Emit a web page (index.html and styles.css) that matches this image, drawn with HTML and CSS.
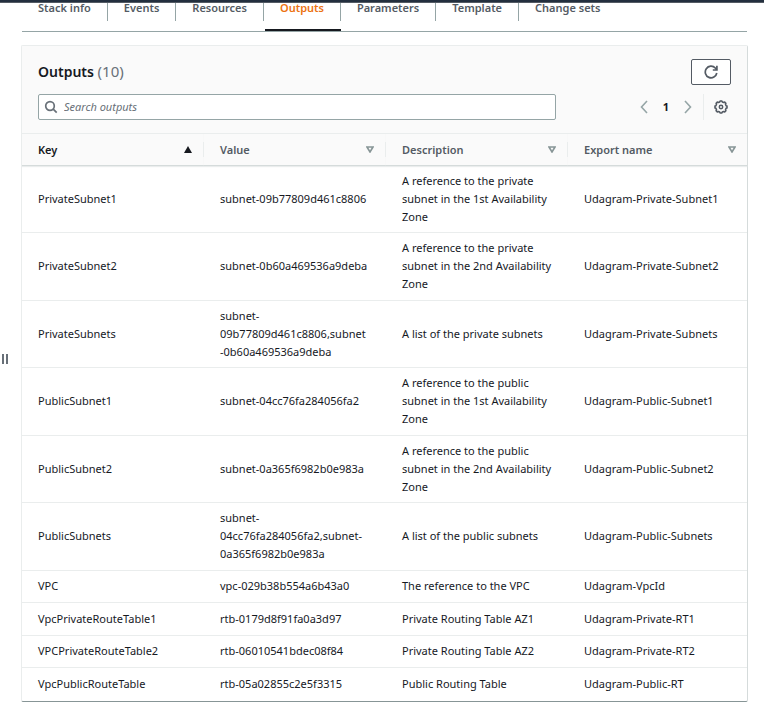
FILE: index.html
```html
<!DOCTYPE html>
<html lang="en">
<head>
<meta charset="utf-8">
<title>Stack outputs</title>
<link rel="stylesheet" href="styles.css">
</head>
<body>
<header class="topbar"></header>
<div class="shell">
  <aside class="rail">
    <button class="grip" type="button" aria-label="Resize panel"><span></span><span></span></button>
  </aside>
  <main class="content">
    <nav class="tabs">
      <a class="tab" href="#info"><span>Stack info</span></a>
      <a class="tab" href="#events"><span>Events</span></a>
      <a class="tab" href="#resources"><span>Resources</span></a>
      <a class="tab active" href="#outputs" aria-current="page"><span>Outputs</span></a>
      <a class="tab" href="#parameters"><span>Parameters</span></a>
      <a class="tab" href="#template"><span>Template</span></a>
      <a class="tab" href="#changesets"><span>Change sets</span></a>
    </nav>
    <section class="panel">
      <div class="panel-head">
        <div class="title-row">
          <h2>Outputs <span class="count">(10)</span></h2>
          <button class="refresh" type="button" aria-label="Refresh">
            <svg width="14" height="14" viewBox="0 0 14 14" fill="none" stroke="currentColor" stroke-width="1.7"><path d="M12.8 8A5.8 5.8 0 1 1 11.3 3L12.6 4.8"/><path d="M8.8 5H12.9V0.7"/></svg>
          </button>
        </div>
        <div class="tools">
          <label class="search">
            <svg width="14" height="14" viewBox="0 0 14 14" fill="none" stroke="currentColor" stroke-width="1.7"><circle cx="6" cy="6" r="4.3"/><path d="M9.2 9.2L12.7 12.7"/></svg>
            <input type="search" placeholder="Search outputs" aria-label="Search outputs">
          </label>
          <div class="pager">
            <button type="button" aria-label="Previous page"><svg width="8" height="14" viewBox="0 0 8 14" fill="none" stroke="currentColor" stroke-width="1.6"><path d="M7 1L1.5 7L7 13"/></svg></button>
            <span class="page">1</span>
            <button type="button" aria-label="Next page"><svg width="8" height="14" viewBox="0 0 8 14" fill="none" stroke="currentColor" stroke-width="1.6"><path d="M1 1L6.5 7L1 13"/></svg></button>
          </div>
          <button class="settings" type="button" aria-label="Preferences">
            <svg width="14" height="14" viewBox="0 0 14 14" fill="none" stroke="currentColor"><path stroke-width="1.6" stroke-linejoin="round" d="M5.7 1.9L6.1 1H7.9L8.3 1.9L9.7 2.5L10.7 2.1L11.9 3.3L11.5 4.3L12.1 5.7L13 6.1V7.9L12.1 8.3L11.5 9.7L11.9 10.7L10.7 11.9L9.7 11.5L8.3 12.1L7.9 13H6.1L5.7 12.1L4.3 11.5L3.3 11.9L2.1 10.7L2.5 9.7L1.9 8.3L1 7.9V6.1L1.9 5.7L2.5 4.3L2.1 3.3L3.3 2.1L4.3 2.5Z"/><circle cx="7" cy="7" r="1.7" stroke-width="1.5"/></svg>
          </button>
        </div>
      </div>
      <table>
        <colgroup><col class="col"><col class="col"><col class="col"><col></colgroup>
        <thead>
          <tr>
            <th class="sorted" aria-sort="ascending"><button type="button">Key <svg width="8" height="7" viewBox="0 0 8 7"><path fill="currentColor" d="M4 0L8 7H0Z"/></svg></button></th>
            <th><button type="button">Value <svg width="8" height="7" viewBox="0 0 8 7"><path fill="none" stroke="currentColor" stroke-width="1.6" d="M1 1H7L4 6Z"/></svg></button></th>
            <th><button type="button">Description <svg width="8" height="7" viewBox="0 0 8 7"><path fill="none" stroke="currentColor" stroke-width="1.6" d="M1 1H7L4 6Z"/></svg></button></th>
            <th><button type="button">Export name <svg width="8" height="7" viewBox="0 0 8 7"><path fill="none" stroke="currentColor" stroke-width="1.6" d="M1 1H7L4 6Z"/></svg></button></th>
          </tr>
        </thead>
        <tbody>
          <tr><td>PrivateSubnet1</td><td>subnet-09b77809d461c8806</td><td>A reference to the private subnet in the 1st Availability Zone</td><td>Udagram-Private-Subnet1</td></tr>
          <tr><td>PrivateSubnet2</td><td>subnet-0b60a469536a9deba</td><td>A reference to the private subnet in the 2nd Availability Zone</td><td>Udagram-Private-Subnet2</td></tr>
          <tr><td>PrivateSubnets</td><td>subnet-<br>09b77809d461c8806,subnet<br>-0b60a469536a9deba</td><td>A list of the private subnets</td><td>Udagram-Private-Subnets</td></tr>
          <tr><td>PublicSubnet1</td><td>subnet-04cc76fa284056fa2</td><td>A reference to the public subnet in the 1st Availability Zone</td><td>Udagram-Public-Subnet1</td></tr>
          <tr><td>PublicSubnet2</td><td>subnet-0a365f6982b0e983a</td><td>A reference to the public subnet in the 2nd Availability Zone</td><td>Udagram-Public-Subnet2</td></tr>
          <tr><td>PublicSubnets</td><td>subnet-<br>04cc76fa284056fa2,subnet-<br>0a365f6982b0e983a</td><td>A list of the public subnets</td><td>Udagram-Public-Subnets</td></tr>
          <tr class="short"><td>VPC</td><td>vpc-029b38b554a6b43a0</td><td>The reference to the VPC</td><td>Udagram-VpcId</td></tr>
          <tr class="short"><td>VpcPrivateRouteTable1</td><td>rtb-0179d8f91fa0a3d97</td><td>Private Routing Table AZ1</td><td>Udagram-Private-RT1</td></tr>
          <tr class="short"><td>VPCPrivateRouteTable2</td><td>rtb-06010541bdec08f84</td><td>Private Routing Table AZ2</td><td>Udagram-Private-RT2</td></tr>
          <tr class="short"><td>VpcPublicRouteTable</td><td>rtb-05a02855c2e5f3315</td><td>Public Routing Table</td><td>Udagram-Public-RT</td></tr>
        </tbody>
      </table>
    </section>
  </main>
</div>
</body>
</html>
```
FILE: styles.css
```css
* { box-sizing: border-box; }
body {
  margin: 0;
  min-height: 100vh;
  display: flex;
  flex-direction: column;
  background: #fff;
  color: #16191f;
  font: 11px/18px "Noto Sans", sans-serif;
}
button { font: inherit; color: inherit; background: none; border: 0; padding: 0; }
svg { display: block; flex: none; }

.topbar { height: 3px; background: #232f3e; border-bottom: 1px solid #545b64; }
.shell { flex: 1; display: flex; }
.rail { flex: 0 0 21px; display: flex; align-items: center; padding: 10px 0 0 2px; }
.grip { display: flex; gap: 2px; }
.grip span { width: 2px; height: 10px; background: #687078; }
.content { flex: 1; min-width: 0; padding-right: 16px; }

.tabs { display: flex; height: 29px; margin: 0 1px; border-bottom: 1px solid #95a5a6; }
.tab {
  display: flex;
  align-items: flex-start;
  color: #545b64;
  font-weight: 600;
  text-decoration: none;
}
.tab span { height: 18px; line-height: 10px; padding: 0 16px; border-right: 1px solid #95a5a6; }
.tab:last-child span { border-right: 0; }
.tab.active { color: #ec7211; background: linear-gradient(#16191f, #16191f) right bottom / calc(100% - 1px) 2px no-repeat; }

.panel {
  margin-top: 13px;
  border: 1px solid #eaeded;
  border-right-color: #d5dbdb;
  border-bottom-color: #879596;
  border-radius: 2px;
}
.panel-head { background: #fafafa; padding: 13px 16px; }
.title-row { display: flex; justify-content: space-between; align-items: flex-start; height: 26px; }
h2 { margin: 0; font-size: 14px; line-height: 24px; font-weight: 600; }
.count { color: #687078; font-size: 15px; font-weight: 400; }
.refresh {
  width: 40px;
  height: 26px;
  display: flex;
  align-items: center;
  justify-content: center;
  border: 1px solid #545b64;
  border-radius: 2px;
  background: #fff;
  color: #545b64;
}
.tools { display: flex; align-items: center; margin-top: 9px; }
.search {
  flex: 0 1 518px;
  height: 26px;
  display: flex;
  align-items: center;
  gap: 6px;
  padding: 0 5px;
  border: 1px solid #95a5a6;
  border-radius: 2px;
  background: #fff;
  color: #687078;
}
.search input { flex: 1; min-width: 0; border: 0; padding: 0; outline: 0; background: none; font: inherit; }
.search input::placeholder { color: #687078; font-style: italic; opacity: 1; }
.pager { display: flex; align-items: center; gap: 15px; margin-left: auto; padding-right: 11px; color: #95a5a6; }
.page { color: #16191f; font-weight: 700; }
.settings { display: flex; align-items: center; height: 26px; padding: 0 3px 0 10px; border-left: 1px solid #eaeded; color: #545b64; }

table { width: 100%; border-collapse: separate; border-spacing: 0; table-layout: fixed; }
.col { width: 182px; }
th {
  height: 33px;
  padding: 0;
  background: #fafafa;
  border-top: 1px solid #eaeded;
  border-bottom: 1px solid #d5dbdb;
  box-shadow: 0 1px 1px #eaeded;
  color: #545b64;
  text-align: left;
}
th button {
  width: 100%;
  height: 15px;
  display: flex;
  align-items: center;
  justify-content: space-between;
  padding: 0 11px 0 16px;
  border-right: 1px solid #eaeded;
  font-weight: 600;
}
th:last-child button { border-right: 0; }
th svg { color: #879596; }
.sorted, .sorted svg { color: #16191f; }
td { height: 67px; padding: 5px 16px 6px; border-bottom: 1px solid #eaeded; vertical-align: middle; }
tr:nth-child(even) td { height: 68px; }
.short td { height: 32px; }
tr.short:nth-child(even) td { height: 33px; }
tr:last-child td { border-bottom: 0; }
```
